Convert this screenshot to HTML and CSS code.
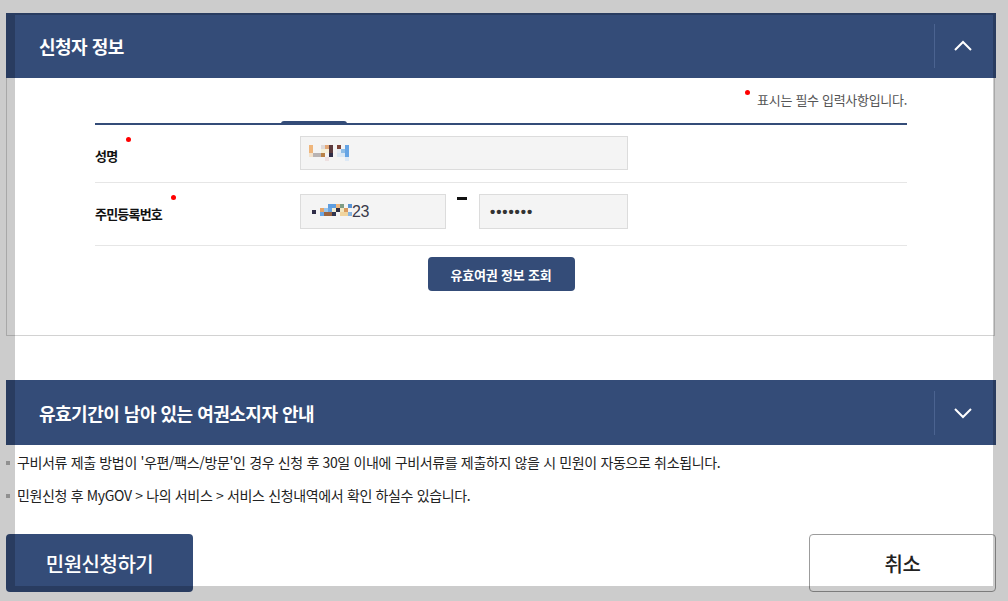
FILE: index.html
```html
<!DOCTYPE html>
<html lang="ko">
<head>
    <meta charset="utf-8">
    <title>신청자 정보</title>
    <link rel="stylesheet" href="styles.css">
</head>
<body>
    <div class="sheet">
        <section class="panel">
            <div class="panel-head">
                <h2 class="panel-title">신청자 정보</h2>
                <button class="fold" type="button">
                    <svg width="18" height="12" viewBox="0 0 18 12"><path d="M1 10 L9 2 L17 10" fill="none" stroke="#fff" stroke-width="2"/></svg>
                </button>
            </div>
            <div class="panel-body">
                <p class="req-note"><span class="req-dot"></span>표시는 필수 입력사항입니다.</p>
                <div class="form-table">
                    <span class="tab-mark"></span>
                    <div class="form-row">
                        <div class="form-label">성명<span class="req-dot label-dot"></span></div>
                        <div class="form-field">
                            <div class="input input-name">
                                <!-- blurred name -->
                                <svg width="48" height="16" viewBox="0 0 48 16">
                                    <rect x="0" y="0" width="4" height="8" fill="#efb67c"/>
                                    <rect x="4" y="8" width="8" height="4" fill="#b9b4b4"/>
                                    <rect x="0" y="8" width="4" height="4" fill="#f3e2cc"/>
                                    <rect x="12" y="0" width="4" height="4" fill="#dedada"/>
                                    <rect x="12" y="4" width="4" height="4" fill="#f4efd6"/>
                                    <rect x="16" y="0" width="4" height="4" fill="#e4a877"/>
                                    <rect x="12" y="8" width="4" height="4" fill="#b98146"/>
                                    <rect x="16" y="4" width="4" height="4" fill="#f6f0dc"/>
                                    <rect x="20" y="0" width="4" height="12" fill="#5b3a3e"/>
                                    <rect x="20" y="8" width="4" height="4" fill="#2f2d48"/>
                                    <rect x="16" y="12" width="4" height="4" fill="#eee0e0"/>
                                    <rect x="28" y="0" width="4" height="4" fill="#7c4438"/>
                                    <rect x="28" y="4" width="4" height="4" fill="#e6ecf4"/>
                                    <rect x="32" y="4" width="4" height="4" fill="#8fbde6"/>
                                    <rect x="28" y="8" width="8" height="4" fill="#d9e7f4"/>
                                    <rect x="36" y="0" width="4" height="12" fill="#66a4e4"/>
                                    <rect x="36" y="12" width="4" height="4" fill="#dde9f6"/>
                                </svg>
                            </div>
                        </div>
                    </div>
                    <div class="form-row form-row-tall">
                        <div class="form-label">주민등록번호<span class="req-dot label-dot"></span></div>
                        <div class="form-field">
                            <div class="input input-front">
                                <span class="mask-dot"></span>
                                <svg width="32" height="16" viewBox="0 0 32 16">
                                    <rect x="8" y="0" width="8" height="4" fill="#5f9ee0"/>
                                    <rect x="16" y="0" width="4" height="4" fill="#efb67c"/>
                                    <rect x="0" y="4" width="4" height="4" fill="#e3a46a"/>
                                    <rect x="4" y="4" width="4" height="4" fill="#9ac6ec"/>
                                    <rect x="8" y="4" width="4" height="4" fill="#6aa6e4"/>
                                    <rect x="12" y="4" width="4" height="4" fill="#f4eed2"/>
                                    <rect x="16" y="4" width="4" height="4" fill="#2b2d44"/>
                                    <rect x="20" y="0" width="4" height="4" fill="#7f9c84"/>
                                    <rect x="20" y="4" width="4" height="4" fill="#f1e6c0"/>
                                    <rect x="24" y="4" width="4" height="4" fill="#d99a5e"/>
                                    <rect x="28" y="0" width="4" height="4" fill="#5a94d6"/>
                                    <rect x="0" y="8" width="4" height="4" fill="#6aa6e4"/>
                                    <rect x="4" y="8" width="8" height="4" fill="#9a6440"/>
                                    <rect x="12" y="8" width="4" height="4" fill="#2f3550"/>
                                    <rect x="20" y="8" width="8" height="4" fill="#f0d49e"/>
                                    <rect x="28" y="8" width="4" height="4" fill="#86b4e2"/>
                                </svg>
                                <span class="plain">23</span>
                            </div>
                            <span class="dash"></span>
                            <div class="input input-back"><span class="secret">•••••••</span></div>
                        </div>
                    </div>
                </div>
                <div class="form-actions">
                    <button class="btn-search" type="button">유효여권 정보 조회</button>
                </div>
            </div>
        </section>

        <section class="panel panel-guide">
            <div class="panel-head">
                <h2 class="panel-title">유효기간이 남아 있는 여권소지자 안내</h2>
                <button class="fold" type="button">
                    <svg width="18" height="12" viewBox="0 0 18 12"><path d="M1 2 L9 10 L17 2" fill="none" stroke="#fff" stroke-width="2"/></svg>
                </button>
            </div>
            <ul class="guide-list">
                <li>구비서류 제출 방법이 '우편/팩스/방문'인 경우 신청 후 30일 이내에 구비서류를 제출하지 않을 시 민원이 자동으로 취소됩니다.</li>
                <li>민원신청 후 MyGOV &gt; 나의 서비스 &gt; 서비스 신청내역에서 확인 하실수 있습니다.</li>
            </ul>
        </section>

        <div class="bottom-actions">
            <button class="btn-apply" type="button">민원신청하기</button>
            <button class="btn-cancel" type="button">취소</button>
        </div>
    </div>

    <!-- modal dim around the sheet -->
    <div class="dim"></div>
</body>
</html>
```

FILE: styles.css
```css
body {
    margin: 0;
    padding-top: 13px;
    background-color: #fff;
    font-family: "Noto Sans CJK KR", "Noto Sans", sans-serif;
    color: #222;
}
button {
    font-family: inherit;
    cursor: pointer;
}
.sheet {
    margin-left: 6px;
    width: 990px;
}
.panel-head {
    height: 65px;
    display: flex;
    align-items: center;
    background-color: #344c78;
}
.panel-title {
    margin: 0;
    padding-left: 33px;
    font-size: 18px;
    font-weight: 700;
    letter-spacing: -0.5px;
    color: #fff;
}
.fold {
    margin-left: auto;
    width: 62px;
    height: 44px;
    padding: 0 5px 0 0;
    border: none;
    border-left: 1px solid #4b6390;
    background: none;
    display: flex;
    justify-content: center;
    align-items: center;
}
.panel-body {
    box-sizing: border-box;
    height: 258px;
    margin-right: 1px;
    padding: 0 87px 0 88px;
    border: 1px solid #d2d2d2;
    border-top: none;
}
.req-note {
    margin: 0 0 13px;
    padding-top: 12px;
    line-height: 20px;
    text-align: right;
    font-size: 13px;
    letter-spacing: -0.3px;
    color: #555;
}
.req-dot {
    display: inline-block;
    width: 5px;
    height: 5px;
    border-radius: 50%;
    background-color: #f00;
    vertical-align: top;
    margin: 0 7px 0 0;
    position: relative;
    top: 0;
}
.form-table {
    position: relative;
    border-top: 2px solid #344c78;
}
.tab-mark {
    position: absolute;
    left: 186px;
    top: -4px;
    width: 66px;
    height: 3px;
    border-radius: 3px 3px 0 0;
    background-color: #344c78;
}
.form-row {
    display: flex;
    align-items: center;
    padding: 11px 0 12px;
    border-bottom: 1px solid #e6e6e6;
}
.form-row-tall {
    padding-bottom: 16px;
}
.form-label {
    width: 205px;
    padding-top: 4px;
    font-size: 13px;
    font-weight: 700;
    letter-spacing: -0.8px;
    color: #111;
}
.label-dot {
    margin: 0 0 0 9px;
    top: -9px;
}
.form-field {
    display: flex;
}
.input {
    box-sizing: border-box;
    height: 34px;
    display: flex;
    align-items: center;
    padding-left: 8px;
    background-color: #f4f4f4;
    border: 1px solid #dcdcdc;
}
.input-name {
    width: 328px;
}
.input-front {
    width: 146px;
    height: 35px;
    padding-left: 11px;
}
.input-back {
    width: 149px;
    height: 35px;
    padding-left: 10px;
}
.mask-dot {
    width: 4px;
    height: 4px;
    margin-right: 4px;
    background-color: #2f2d48;
}
.plain {
    font-family: "Liberation Sans", sans-serif;
    font-size: 16px;
    color: #3a3a4a;
    letter-spacing: -0.5px;
}
.dash {
    width: 10px;
    height: 3px;
    margin: 3px 12px 0 11px;
    background-color: #111;
}
.secret {
    font-family: "Liberation Sans", sans-serif;
    font-size: 15px;
    font-weight: 700;
    letter-spacing: 0.9px;
    color: #333;
}
.form-actions {
    display: flex;
    justify-content: center;
    padding-top: 11px;
}
.btn-search {
    width: 147px;
    height: 34px;
    border: none;
    border-radius: 4px;
    background-color: #344c78;
    color: #fff;
    font-size: 13px;
    font-weight: 700;
    letter-spacing: -0.2px;
}
.panel-guide {
    margin-top: 44px;
}
.guide-list {
    list-style: none;
    margin: 0;
    padding: 7px 0 0;
}
.guide-list li {
    position: relative;
    padding-left: 11px;
    line-height: 20px;
    font-size: 14px;
    letter-spacing: -0.35px;
    color: #222;
}
.guide-list li + li {
    margin-top: 13px;
}
.guide-list li::before {
    content: "";
    position: absolute;
    left: 0;
    top: 9px;
    width: 4px;
    height: 4px;
    background-color: #b4b4b4;
}
.bottom-actions {
    display: flex;
    justify-content: space-between;
    margin-top: 29px;
}
.btn-apply,
.btn-cancel {
    width: 187px;
    height: 58px;
    border-radius: 4px;
    font-size: 20px;
    font-weight: 500;
    letter-spacing: -0.5px;
}
.btn-apply {
    border: none;
    background-color: #344c78;
    color: #fff;
}
.btn-cancel {
    border: 1px solid #9c9c9c;
    background-color: #fff;
    color: #222;
}
.dim {
    position: fixed;
    left: 15px;
    top: 15px;
    width: 978px;
    height: 571px;
    box-shadow: 0 0 0 2000px rgba(0, 0, 0, 0.2);
    pointer-events: none;
}
```
